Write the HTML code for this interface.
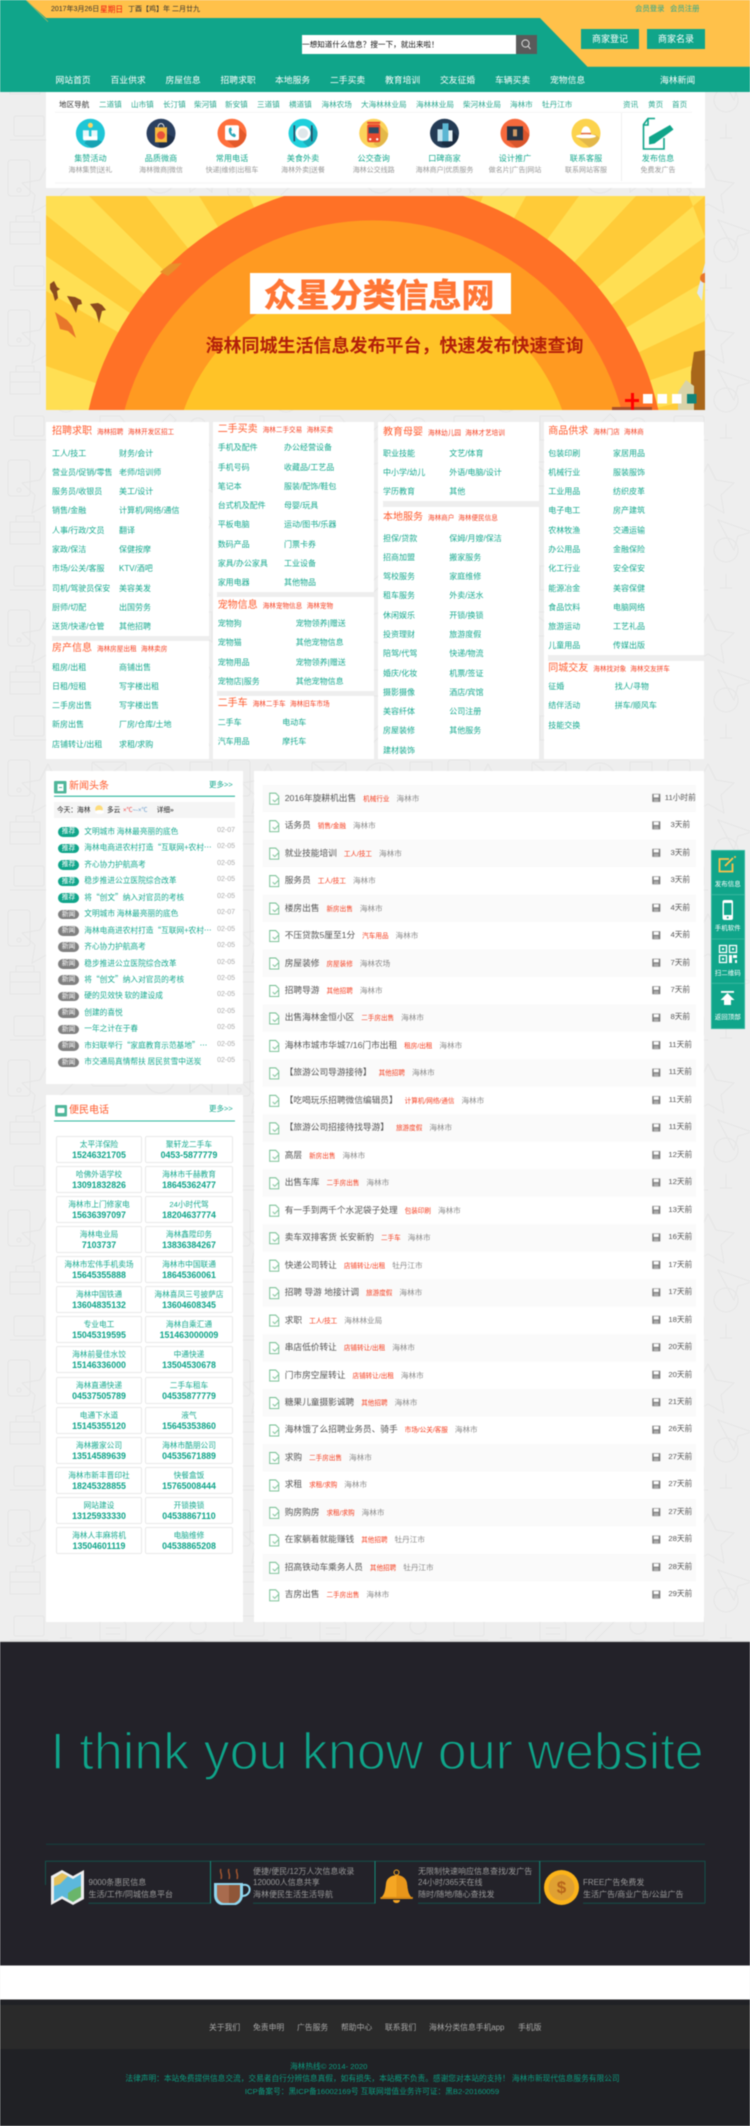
<!DOCTYPE html>
<html lang="zh-CN"><head><meta charset="utf-8"><title>众星分类信息网</title>
<style>
html,body{margin:0;padding:0;background:#eee}
body{width:750px;height:2126px;position:relative;overflow:hidden;font-family:"Liberation Sans","Noto Sans CJK SC",sans-serif;font-size:8px;color:#17a98f}
#w{position:absolute;left:0;top:0;width:750px;height:2126px;filter:blur(.4px)}
#w>svg{position:absolute;left:0;top:0}
.t{position:absolute;white-space:nowrap;line-height:12px;margin-top:-6px}
.c{transform:translateX(-50%)}
.nv{font-size:8.8px;color:#fff}
.sn{font-size:7.6px;color:#2aa78f}
.it{font-size:8.1px;color:#17a98f}
.is{font-size:7px;color:#999}
.h{font-size:10px;color:#ff5c2e}
.s{font-size:6.6px;color:#f53d1e}
.k{position:absolute;display:grid;grid-auto-rows:19.27px;line-height:19.27px;white-space:nowrap}
.n{position:absolute;left:58px;top:823.8px;width:177px;font-size:7.7px}
.n div{height:16.48px;line-height:16.48px;position:relative;white-space:nowrap}
.n b{position:absolute;left:0;top:3.4px;width:21px;height:9.6px;line-height:9.6px;border-radius:5px;background:#808080;color:#fff;font-weight:normal;font-size:6.8px;text-align:center}
.n .a b{background:#10a58a}
.n span{position:absolute;left:26.3px;font-family:"Noto Sans CJK SC","Liberation Sans",sans-serif}
.n em{position:absolute;right:0;top:-1px;font-style:normal;font-size:7px;color:#aaa}
.p{position:absolute;left:55.7px;top:1135.5px;display:grid;grid-template-columns:86.6px 87.4px;column-gap:3px;row-gap:3.15px;grid-auto-rows:27px}
.p div{box-sizing:border-box;border:1px solid #e9e9e9;border-radius:2px;text-align:center;padding-top:2px;font-size:7.7px;line-height:11px;white-space:nowrap}
.p b{display:block;font-size:8.8px;color:#0fa58a}
.l{position:absolute;left:284.7px;top:784.7px;width:411px}
.l div{height:27.47px;line-height:27.47px;font-size:8.7px;color:#555;white-space:nowrap;position:relative}
.l i{font-style:normal;font-size:6.6px;color:#f53d1e;margin-left:7px}
.l u{text-decoration:none;font-size:7.6px;color:#888;margin-left:7px}
.l em{position:absolute;left:395.6px;top:-1px;transform:translateX(-50%);font-style:normal;font-size:7.7px;color:#555}
.f{font-size:6.5px;color:#fff}
.fe{font-size:8px;color:#999}
.fn{font-size:7.8px;color:#aaa}
.cp{font-size:7.7px;color:#0c9c80}
</style></head><body><div id="w">
<svg width="750" height="2126" viewBox="0 0 750 2126" xmlns="http://www.w3.org/2000/svg">
<defs>
<pattern id="bg" patternUnits="userSpaceOnUse" width="220" height="150">
<g fill="none" stroke="#e5e5e5" stroke-width="1">
<rect x="8" y="10" width="22" height="36" rx="3"/><circle cx="19" cy="40" r="2"/>
<path d="M48 14l8 16 18 3-13 12 3 18-16-9-16 9 3-18-13-12 18-3z"/>
<rect x="92" y="12" width="34" height="24" rx="2"/><path d="M92 12l17 13 17-13"/>
<circle cx="160" cy="28" r="15"/><path d="M160 16v12l9 6"/>
<path d="M190 12h22v30l-11-8-11 8z"/>
<path d="M10 72h30v22H10zM16 72v-6h18v6M10 82h30"/>
<path d="M58 70l34 12-14 4-4 14z"/>
<circle cx="118" cy="84" r="11"/><path d="M126 92l10 10"/>
<path d="M152 70h28v26h-28zM158 78h16M158 84h16M158 90h10"/>
<path d="M198 68c8-6 16 0 12 8l-8 16-10-6z"/>
<rect x="14" y="116" width="30" height="20" rx="2"/><path d="M10 140h38"/>
<path d="M66 112a12 12 0 1 1 .1 0zM66 124v14M60 138h12"/>
<path d="M100 116h20l6 8v16h-26zM106 128h14M106 134h14"/>
<path d="M146 138l24-24 6 6-24 24h-6z"/>
<circle cx="198" cy="126" r="8"/><path d="M186 146c2-8 22-8 24 0"/>
</g></pattern>
<clipPath id="cc"><circle cx="15" cy="15" r="14.5"/></clipPath>
<clipPath id="bn"><rect width="659" height="214"/></clipPath>
<pattern id="rw" patternUnits="userSpaceOnUse" x="262.7" y="784.7" width="433.3" height="54.94">
<rect width="433.3" height="27.47" fill="#fafafa"/>
<g id="ri">
<path d="M7 8.5h6l3 3v8H7z" fill="#fff" stroke="#6dbb8c" stroke-width=".9"/><path d="M10 15l2 2 4-4" fill="none" stroke="#6dbb8c" stroke-width=".9"/>
<rect x="389.6" y="9.2" width="8" height="8" fill="#7d7d7d"/><rect x="391" y="9.8" width="5" height="3" fill="#fff"/><rect x="391.2" y="14" width="4.6" height="3.2" fill="#aaa"/>
</g>
<use href="#ri" y="27.47"/>
</pattern>
</defs>
<rect width="750" height="2126" fill="#eeeeee"/>
<rect width="750" height="1642" fill="url(#bg)"/>
<!-- header -->
<rect width="750" height="92" fill="#10a58a"/>
<polygon points="26,0 46,18 540,18 587.5,66.7 750,66.7 750,0" fill="#ffc14a"/>
<line x1="26" y1="0" x2="48" y2="21.7" stroke="#9fb664" stroke-width=".8"/>
<rect x="302" y="35" width="214" height="19" fill="#fff"/>
<rect x="516" y="35" width="21" height="19" fill="#5a5a5a"/>
<circle cx="525.5" cy="43.5" r="3.6" fill="none" stroke="#ddd" stroke-width="1"/><line x1="528" y1="46.2" x2="530.5" y2="49" stroke="#ddd"/>
<rect x="581" y="29" width="58" height="20" fill="#10a58a"/><rect x="647" y="29" width="58" height="20" fill="#10a58a"/>
<!-- white panels -->
<rect x="46" y="92" width="659" height="96" fill="#fff"/>
<line x1="55" y1="112.3" x2="692" y2="112.3" stroke="#f4f4f4"/>
<line x1="55" y1="183" x2="692" y2="183" stroke="#f4f4f4"/>
<line x1="621.5" y1="113" x2="621.5" y2="181" stroke="#f0f0f0"/>
<!-- icons row -->
<g transform="translate(75.4,118.3)"><circle cx="15" cy="15" r="14.5" fill="#1fc6d6"/><path d="M9 25l6-8 14 8-8 8z" fill="#17a3b3" clip-path="url(#cc)"/><circle cx="15" cy="7" r="2.5" fill="#fbd766"/><rect x="7.500" y="12" width="6" height="9" fill="#e9f8fa"/><rect x="16" y="12" width="6" height="9" fill="#e9f8fa"/><rect x="8" y="18" width="14" height="4" fill="#fff"/></g>
<g transform="translate(146,118.3)"><circle cx="15" cy="15" r="14.5" fill="#2a3f5f"/><path d="M10 10l20 10v12H14z" fill="#1e2f49" clip-path="url(#cc)"/><rect x="9" y="9" width="12" height="15" fill="#f7b93e"/><circle cx="15" cy="17" r="4" fill="#e8503a"/><path d="M12 9c0-5 6-5 6 0" fill="none" stroke="#ddd"/></g>
<g transform="translate(217,118.3)"><circle cx="15" cy="15" r="14.5" fill="#ff6f3c"/><path d="M10 22l11-14 10 10-10 14z" fill="#e45a2b" clip-path="url(#cc)"/><rect x="8" y="7" width="14" height="15" rx="2" fill="#fff"/><path d="M12 10c-1 4 1 8 6 9l1-2-2-2-2 1-1-3 1-1-1-3z" fill="#2aa7b8"/></g>
<g transform="translate(288,118.3)"><circle cx="15" cy="15" r="14.5" fill="#1fd0dc"/><path d="M15 24l9-16 8 8-8 16z" fill="#19aebb" clip-path="url(#cc)"/><circle cx="15" cy="15" r="7.500" fill="#fff"/><circle cx="15" cy="15" r="5" fill="#dfe7ea"/><rect x="5.500" y="7" width="1.600" height="16" fill="#2b4a63"/><rect x="23" y="7" width="1.600" height="16" fill="#2b4a63"/></g>
<g transform="translate(358.700,118.300)"><circle cx="15" cy="15" r="14.500" fill="#fcd35a"/><path d="M15 26l7-18 9 9-9 13z" fill="#e4b84a" clip-path="url(#cc)"/><rect x="8.500" y="6" width="13" height="18" rx="2" fill="#e8492f"/><rect x="10" y="9" width="10" height="6" fill="#2c4a63"/><circle cx="11.500" cy="21" r="1.200" fill="#fff"/><circle cx="18.500" cy="21" r="1.200" fill="#fff"/><rect x="8.500" y="3.500" width="13" height="2" fill="#e8492f"/></g>
<g transform="translate(429.500,118.300)"><circle cx="15" cy="15" r="14.500" fill="#243b55"/><path d="M18 8l14 14-8 10-12-6z" fill="#1a2c41" clip-path="url(#cc)"/><rect x="8" y="11" width="5" height="12" fill="#bfe3ef"/><rect x="13" y="5" width="6" height="18" fill="#5bb6d3"/><rect x="19" y="12" width="4" height="11" fill="#e6f2f6"/></g>
<g transform="translate(500,118.300)"><circle cx="15" cy="15" r="14.500" fill="#f7693c"/><path d="M8 22l14-13 10 10-12 14z" fill="#d9552c" clip-path="url(#cc)"/><rect x="7" y="8" width="16" height="14" fill="#263241"/><rect x="13" y="11" width="4" height="7" fill="#c96" /></g>
<g transform="translate(571,118.300)"><circle cx="15" cy="15" r="14.500" fill="#fcd34d"/><path d="M6 19l18-3 8 6-10 10z" fill="#e3b84a" clip-path="url(#cc)"/><path d="M10 17c0-12 10-12 10 0z" fill="#fff"/><rect x="10" y="14.500" width="10" height="2.500" fill="#e2683c"/><ellipse cx="15" cy="18" rx="10" ry="2" fill="#fff"/></g>
<g fill="none" stroke="#10a58a" stroke-width="1.600"><path d="M655 118.500h-7l-4.500 6v24.500h20.500v-11"/><path d="M648 119v6h-4.500"/></g>
<path d="M649 137l21-12 3.500 4.500-19 14-5.500 1z" fill="#10a58a"/>
<!-- banner -->
<g transform="translate(46,196)" clip-path="url(#bn)">
<rect width="659" height="214" fill="#ffcb38"/>
<g fill="#ffdf53">
<polygon points="327,282 43,0 0,0 0,19"/><polygon points="327,282 153,0 100,0"/><polygon points="327,282 241,0 203,0"/>
<polygon points="327,282 480,0 437,0"/><polygon points="327,282 590,0 533,0"/><polygon points="327,282 659,0 643,0 659,41"/>
<polygon points="327,282 0,60 0,95"/><polygon points="327,282 0,170 0,214"/><polygon points="327,282 659,85 659,125"/><polygon points="327,282 659,165 659,200"/>
</g>
<circle cx="327.500" cy="278" r="292" fill="#ff7126"/>
<circle cx="327" cy="282" r="257.600" fill="#ff9a21"/>
<circle cx="327" cy="282" r="201" fill="#ffc327"/>
<rect x="204" y="77" width="261" height="41" fill="#fff"/>
<g fill="#8b4a1e"><path d="M4 88l4-3 3 6 3 2-3 2 1 7-3 3-2-7-3-5z"/><path d="M21 100l8 1 6 3 1 4-4 1-2 8-4-8z"/><path d="M44 108l8-1 4 2 4 5-4 1-3 12-3-11z"/></g>
<path d="M9 116l12 8 5 6 4 12-8-7-8-2z" fill="#e8762a"/>
<path d="M114 76l10-8 12-1-6 6-8 7z" fill="#e8902a"/>
<path d="M656 105l3-32v-6l-8 30z" fill="#dde8f2"/><circle cx="659" cy="82" r="5" fill="#e8762a"/>
<path d="M645 214v-38l3-20 11-2v60z" fill="#a8661a"/>
<path d="M632 214v-18l8-12 8 6v24z" fill="#d9d3a8"/>
<rect x="566" y="211" width="40" height="3" fill="#a8502a"/>
<g fill="#f00"><rect x="585" y="197" width="3" height="17"/><rect x="579" y="203" width="14" height="3"/></g>
<g fill="#fff"><rect x="597" y="198" width="9.500" height="9.500"/><rect x="611.500" y="198" width="9.500" height="9.500"/><rect x="626" y="198" width="9.500" height="9.500"/></g>
<rect x="641" y="198" width="9.500" height="9.500" fill="#10857a"/>
</g>
<!-- category panels -->
<g fill="#fff"><rect x="46" y="422" width="163" height="337"/><rect x="213" y="422" width="161" height="337"/><rect x="378" y="422" width="161" height="337"/><rect x="544" y="422" width="160" height="337"/></g>
<g fill="#eee"><rect x="52" y="636" width="157" height="5"/><rect x="217" y="592" width="157" height="5"/><rect x="217" y="691" width="157" height="5"/><rect x="383" y="501" width="156" height="6"/><rect x="548" y="655" width="156" height="6"/></g>
<!-- left/right panels -->
<g fill="#fff"><rect x="46" y="771" width="197" height="313"/><rect x="46" y="1095" width="197" height="527"/><rect x="254" y="771" width="450" height="851"/></g>
<rect x="54" y="781" width="12.500" height="12.500" rx="1" fill="#4fb69a"/><rect x="57.500" y="784" width="6" height="7" fill="#fff"/><rect x="59" y="787" width="3" height="1" fill="#4fb69a"/>
<line x1="54" y1="796.300" x2="235" y2="796.300" stroke="#12ad92"/>
<rect x="54" y="802" width="181" height="16" fill="#f5f5f5"/>
<circle cx="99" cy="809" r="3.800" fill="#fddc7a"/><ellipse cx="99.500" cy="812" rx="4.500" ry="2" fill="#fff"/>
<rect x="55" y="1105" width="12" height="11.500" rx="1" fill="#4fb69a"/><rect x="57.500" y="1108" width="7" height="5" rx="1" fill="#fff"/>
<line x1="54" y1="1121" x2="235" y2="1121" stroke="#2db89e"/>
<rect x="262.700" y="784.700" width="433.300" height="824.100" fill="url(#rw)"/>
<!-- float -->
<rect x="711.300" y="850.300" width="33.400" height="178.400" fill="#10a58a"/>
<rect x="711.300" y="850.300" width="33.400" height="178.400" fill="none" stroke="#4ec2ac" stroke-width=".7"/>
<g stroke="#3fb9a1" stroke-width=".8"><line x1="711" y1="894.700" x2="745" y2="894.700"/><line x1="711" y1="939" x2="745" y2="939"/><line x1="711" y1="983.300" x2="745" y2="983.300"/></g>
<path d="M729 859h-9.500v12.500h13v-8" fill="none" stroke="#ffc14a" stroke-width="1.800"/><path d="M725 866l8-8" stroke="#ffc14a" stroke-width="1.800"/><circle cx="735" cy="857" r="1" fill="#ffc14a"/>
<rect x="722.500" y="900" width="10.500" height="20" rx="2" fill="#fff"/><rect x="724" y="903" width="7.500" height="12" fill="#10a58a"/><circle cx="727.700" cy="917.500" r="1" fill="#10a58a"/>
<g fill="none" stroke="#fff" stroke-width="1.300"><rect x="719.500" y="945.500" width="7" height="7"/><rect x="729.500" y="945.500" width="7" height="7"/><rect x="719.500" y="955.500" width="7" height="7"/></g>
<g fill="#fff"><rect x="722" y="948" width="2" height="2"/><rect x="732" y="948" width="2" height="2"/><rect x="722" y="958" width="2" height="2"/><rect x="729" y="955" width="3" height="8"/><rect x="733" y="955" width="4" height="3"/><rect x="735" y="960" width="2" height="3"/><rect x="721" y="991" width="13" height="1.800"/><polygon points="727.500,993 734.500,1000 731,1000 731,1005 724,1005 724,1000 720.500,1000"/></g>
<!-- dark -->
<rect y="1642" width="750" height="323.500" fill="#232229"/>
<rect y="1641" width="750" height="1" fill="#ccc"/>
<line x1="46" y1="1844.300" x2="705" y2="1844.300" stroke="#15403f"/>
<g stroke="#15504a" fill="none"><path d="M45.500 1885V1861.300H705V1903.300"/><path d="M88.500 1903.300H210M253 1903.300H375M418 1903.300H540M583 1903.300H705"/></g>
<g stroke="#148a78"><line x1="210.500" y1="1861" x2="210.500" y2="1903.500"/><line x1="375" y1="1861" x2="375" y2="1903.500"/><line x1="539.700" y1="1861" x2="539.700" y2="1903.500"/></g>
<polygon points="51,1876 62,1870 73,1876 84,1870 84,1899 73,1905 62,1899 51,1905" fill="#eee"/>
<polygon points="54,1878 62,1873 73,1879 81,1874 81,1897 73,1902 62,1896 54,1901" fill="#5cb8dc"/>
<polygon points="54,1878 62,1873 68,1876 60,1884 54,1886" fill="#e5c05a"/><polygon points="68,1893 74,1889 81,1886 81,1897 73,1902 68,1899" fill="#6ab56a"/>
<g fill="none" stroke="#a0552f" stroke-width="1.500"><path d="M221 1869c-2 3 2 5 0 10"/><path d="M229 1869c-2 3 2 5 0 10"/><path d="M237 1869c-2 3 2 5 0 10"/></g>
<path d="M214 1883h29v12c0 6-5 10-8 10h-13c-4 0-8-4-8-10z" fill="#8fd6ee"/><path d="M217 1885h23v10c0 5-4 8-7 8h-9c-3 0-7-3-7-8z" fill="#a86b4e"/><path d="M229 1885h11v10c0 5-4 8-7 8h-4z" fill="#8f5638"/>
<path d="M243 1885c9-2 9 11-1 11" fill="none" stroke="#8fd6ee" stroke-width="2"/>
<circle cx="396.500" cy="1872.500" r="2.500" fill="none" stroke="#f5a623"/>
<path d="M380 1898.500c4-3 5-6 6-15 1-11 20-11 21 0 1 9 2 12 6 15z" fill="#f5a623"/><path d="M396.500 1875c5 0 10 3 10.500 9 1 9 2 12 6 15h-16.500z" fill="#e8961a"/>
<path d="M380.500 1897h32.500l-.5 2h-32z" fill="#d98a15"/><path d="M393 1900h7c0 4-7 4-7 0z" fill="#f5a623"/>
<circle cx="561.500" cy="1887.500" r="17.500" fill="#fbb31a"/><circle cx="561.500" cy="1887.500" r="13" fill="#dfa032"/>
<text x="561.500" y="1893" text-anchor="middle" font-family="Liberation Sans,sans-serif" font-size="17" font-weight="bold" fill="#b8651a">$</text>
<rect y="1965.500" width="750" height="34" fill="#fff"/>
<rect y="1999.500" width="750" height="127" fill="#202125"/>
<rect y="2005" width="750" height="44" fill="#2a2a2a"/>
</svg>

<!-- header text -->
<div class="t" style="left:51px;top:9.700px;font-size:7px;color:#333">2017年3月26日</div>
<div class="t" style="left:100px;top:9.700px;font-size:7.700px;color:#f01010">星期日</div>
<div class="t" style="left:128px;top:9.700px;font-size:7px;color:#333">丁酉【鸡】年 二月廿九</div>
<div class="t" style="left:635px;top:9px;font-size:7.400px;color:#2aa78f">会员登录</div>
<div class="t" style="left:670px;top:9px;font-size:7.400px;color:#2aa78f">会员注册</div>
<div class="t" style="left:302px;top:45px;font-size:7.600px;color:#111">一想知道什么信息？搜一下，就出来啦！</div>
<div class="t c" style="left:610px;top:39px;font-size:9px;color:#fff">商家登记</div>
<div class="t c" style="left:676px;top:39px;font-size:9px;color:#fff">商家名录</div>
<div class="t nv" style="left:55.500px;top:80px">网站首页</div>
<div class="t nv" style="left:110.500px;top:80px">百业供求</div>
<div class="t nv" style="left:165.500px;top:80px">房屋信息</div>
<div class="t nv" style="left:220.500px;top:80px">招聘求职</div>
<div class="t nv" style="left:275px;top:80px">本地服务</div>
<div class="t nv" style="left:330px;top:80px">二手买卖</div>
<div class="t nv" style="left:385px;top:80px">教育培训</div>
<div class="t nv" style="left:440px;top:80px">交友征婚</div>
<div class="t nv" style="left:495px;top:80px">车辆买卖</div>
<div class="t nv" style="left:550px;top:80px">宠物信息</div>
<div class="t nv" style="left:660px;top:80px">海林新闻</div>

<div class="t sn" style="left:59px;top:105px;color:#333">地区导航</div>
<div class="t sn" style="left:99px;top:105px">二道镇</div>
<div class="t sn" style="left:131px;top:105px">山市镇</div>
<div class="t sn" style="left:163px;top:105px">长汀镇</div>
<div class="t sn" style="left:194px;top:105px">柴河镇</div>
<div class="t sn" style="left:225px;top:105px">新安镇</div>
<div class="t sn" style="left:257px;top:105px">三道镇</div>
<div class="t sn" style="left:289px;top:105px">横道镇</div>
<div class="t sn" style="left:321.500px;top:105px">海林农场</div>
<div class="t sn" style="left:361px;top:105px">大海林林业局</div>
<div class="t sn" style="left:416px;top:105px">海林林业局</div>
<div class="t sn" style="left:463px;top:105px">柴河林业局</div>
<div class="t sn" style="left:510px;top:105px">海林市</div>
<div class="t sn" style="left:542px;top:105px">牡丹江市</div>
<div class="t sn" style="left:623px;top:105px">资讯</div>
<div class="t sn" style="left:648px;top:105px">黄页</div>
<div class="t sn" style="left:672px;top:105px">首页</div>

<div class="t c it" style="left:90.400px;top:158.500px">集赞活动</div><div class="t c is" style="left:90.400px;top:170.700px">海林集赞|送礼</div>
<div class="t c it" style="left:161px;top:158.500px">品质微商</div><div class="t c is" style="left:161px;top:170.700px">海林微商|微信</div>
<div class="t c it" style="left:232px;top:158.500px">常用电话</div><div class="t c is" style="left:232px;top:170.700px">快递|维修|出租车</div>
<div class="t c it" style="left:303px;top:158.500px">美食外卖</div><div class="t c is" style="left:303px;top:170.700px">海林外卖|送餐</div>
<div class="t c it" style="left:373.700px;top:158.500px">公交查询</div><div class="t c is" style="left:373.700px;top:170.700px">海林公交线路</div>
<div class="t c it" style="left:444.500px;top:158.500px">口碑商家</div><div class="t c is" style="left:444.500px;top:170.700px">海林商户|优质服务</div>
<div class="t c it" style="left:515px;top:158.500px">设计推广</div><div class="t c is" style="left:515px;top:170.700px">做名片|广告|网站</div>
<div class="t c it" style="left:586px;top:158.500px">联系客服</div><div class="t c is" style="left:586px;top:170.700px">联系网站客服</div>
<div class="t c it" style="left:658px;top:158.500px">发布信息</div><div class="t c is" style="left:658px;top:170.700px">免费发广告</div>

<!-- banner text -->
<div class="t c" style="left:379px;top:293px;font-size:33px;line-height:40px;margin-top:-20px;font-weight:900;color:#ff7635;font-family:'Noto Sans CJK SC',sans-serif">众星分类信息网</div>
<div class="t c" style="left:394.500px;top:345px;font-size:18px;line-height:24px;margin-top:-12px;font-weight:700;color:#b3200a;font-family:'Noto Sans CJK SC',sans-serif">海林同城生活信息发布平台，快速发布快速查询</div>

<!-- categories -->
<div class="t h" style="left:52px;top:432px">招聘求职</div><div class="t s" style="left:97px;top:433px">海林招聘</div><div class="t s" style="left:128px;top:433px">海林开发区招工</div>
<div class="k" style="left:52px;top:443.700px;grid-template-columns:67px auto"><span>工人/技工</span><span>财务/会计</span><span>营业员/促销/零售</span><span>老师/培训师</span><span>服务员/收银员</span><span>美工/设计</span><span>销售/金融</span><span>计算机/网络/通信</span><span>人事/行政/文员</span><span>翻译</span><span>家政/保洁</span><span>保健按摩</span><span>市场/公关/客服</span><span>KTV/酒吧</span><span>司机/驾驶员保安</span><span>美容美发</span><span>厨师/切配</span><span>出国劳务</span><span>送货/快递/仓管</span><span>其他招聘</span></div>
<div class="t h" style="left:52px;top:649.300px">房产信息</div><div class="t s" style="left:97px;top:650.300px">海林房屋出租</div><div class="t s" style="left:141px;top:650.300px">海林卖房</div>
<div class="k" style="left:52px;top:657.700px;grid-template-columns:67px auto"><span>租房/出租</span><span>商铺出售</span><span>日租/短租</span><span>写字楼出租</span><span>二手房出售</span><span>写字楼出售</span><span>新房出售</span><span>厂房/仓库/土地</span><span>店铺转让/出租</span><span>求租/求购</span></div>

<div class="t h" style="left:217.700px;top:430px">二手买卖</div><div class="t s" style="left:262.700px;top:431px">海林二手交易</div><div class="t s" style="left:306.700px;top:431px">海林买卖</div>
<div class="k" style="left:217.700px;top:438.400px;grid-template-columns:66.300px auto"><span>手机及配件</span><span>办公经营设备</span><span>手机号码</span><span>收藏品/工艺品</span><span>笔记本</span><span>服装/配饰/鞋包</span><span>台式机及配件</span><span>母婴/玩具</span><span>平板电脑</span><span>运动/图书/乐器</span><span>数码产品</span><span>门票卡券</span><span>家具/办公家具</span><span>工业设备</span><span>家用电器</span><span>其他物品</span></div>
<div class="t h" style="left:217.700px;top:605.700px">宠物信息</div><div class="t s" style="left:262.700px;top:606.700px">海林宠物信息</div><div class="t s" style="left:306.700px;top:606.700px">海林宠物</div>
<div class="k" style="left:217.700px;top:614.100px;grid-template-columns:78px auto"><span>宠物狗</span><span>宠物领养|赠送</span><span>宠物猫</span><span>其他宠物信息</span><span>宠物用品</span><span>宠物领养|赠送</span><span>宠物店|服务</span><span>其他宠物信息</span></div>
<div class="t h" style="left:217.700px;top:704.300px">二手车</div><div class="t s" style="left:252.700px;top:705.300px">海林二手车</div><div class="t s" style="left:290px;top:705.300px">海林旧车市场</div>
<div class="k" style="left:217.700px;top:713px;grid-template-columns:64.600px auto"><span>二手车</span><span>电动车</span><span>汽车用品</span><span>摩托车</span></div>

<div class="t h" style="left:383px;top:432.700px">教育母婴</div><div class="t s" style="left:428px;top:433.700px">海林幼儿园</div><div class="t s" style="left:465.300px;top:433.700px">海林才艺培训</div>
<div class="k" style="left:383px;top:443.700px;grid-template-columns:66.300px auto"><span>职业技能</span><span>文艺/体育</span><span>中小学/幼儿</span><span>外语/电脑/设计</span><span>学历教育</span><span>其他</span></div>
<div class="t h" style="left:383px;top:517.700px">本地服务</div><div class="t s" style="left:428px;top:518.700px">海林商户</div><div class="t s" style="left:458.300px;top:518.700px">海林便民信息</div>
<div class="k" style="left:383px;top:528.700px;grid-template-columns:66.300px auto"><span>担保/贷款</span><span>保姆/月嫂/保洁</span><span>招商加盟</span><span>搬家服务</span><span>驾校服务</span><span>家庭维修</span><span>租车服务</span><span>外卖/送水</span><span>休闲娱乐</span><span>开锁/换锁</span><span>投资理财</span><span>旅游度假</span><span>陪驾/代驾</span><span>快递/物流</span><span>婚庆/化妆</span><span>机票/签证</span><span>摄影摄像</span><span>酒店/宾馆</span><span>美容纤体</span><span>公司注册</span><span>房屋装修</span><span>其他服务</span><span>建材装饰</span></div>

<div class="t h" style="left:548.300px;top:432px">商品供求</div><div class="t s" style="left:593.300px;top:433px">海林门店</div><div class="t s" style="left:624px;top:433px">海林商</div>
<div class="k" style="left:548.300px;top:443.700px;grid-template-columns:64.700px auto"><span>包装印刷</span><span>家居用品</span><span>机械行业</span><span>服装服饰</span><span>工业用品</span><span>纺织皮革</span><span>电子电工</span><span>房产建筑</span><span>农林牧渔</span><span>交通运输</span><span>办公用品</span><span>金融保险</span><span>化工行业</span><span>安全保安</span><span>能源冶金</span><span>美容保健</span><span>食品饮料</span><span>电脑网络</span><span>旅游运动</span><span>工艺礼品</span><span>儿童用品</span><span>传媒出版</span></div>
<div class="t h" style="left:548.300px;top:668.700px">同城交友</div><div class="t s" style="left:593.300px;top:669.700px">海林找对象</div><div class="t s" style="left:630.300px;top:669.700px">海林交友拼车</div>
<div class="k" style="left:548.300px;top:677px;grid-template-columns:66.400px auto"><span>征婚</span><span>找人/寻物</span><span>结伴活动</span><span>拼车/顺风车</span><span>技能交换</span></div>

<!-- news -->
<div class="t h" style="left:69px;top:786.700px">新闻头条</div>
<div class="t" style="left:209px;top:785px;font-size:7.500px">更多&gt;&gt;</div>
<div class="t" style="left:57px;top:810.700px;font-size:6.700px;color:#222">今天：海林</div>
<div class="t" style="left:107px;top:810.700px;font-size:6.700px;color:#222">多云</div>
<div class="t" style="left:123px;top:810.700px;font-size:6px;color:#e44">×℃<span style="color:#69c">~-×℃</span></div>
<div class="t" style="left:156.700px;top:810.700px;font-size:6.700px;color:#222">详细»</div>
<div class="n">
<div class="a"><b>推荐</b><span>文明城市 海林最亮丽的底色</span><em>02-07</em></div>
<div class="a"><b>推荐</b><span>海林电商进农村打造“互联网+农村…</span><em>02-05</em></div>
<div class="a"><b>推荐</b><span>齐心协力护航高考</span><em>02-05</em></div>
<div class="a"><b>推荐</b><span>稳步推进公立医院综合改革</span><em>02-05</em></div>
<div class="a"><b>推荐</b><span>将“创文”纳入对官员的考核</span><em>02-05</em></div>
<div><b>新闻</b><span>文明城市 海林最亮丽的底色</span><em>02-07</em></div>
<div><b>新闻</b><span>海林电商进农村打造“互联网+农村…</span><em>02-05</em></div>
<div><b>新闻</b><span>齐心协力护航高考</span><em>02-05</em></div>
<div><b>新闻</b><span>稳步推进公立医院综合改革</span><em>02-05</em></div>
<div><b>新闻</b><span>将“创文”纳入对官员的考核</span><em>02-05</em></div>
<div><b>新闻</b><span>硬的见效快 软的建设成</span><em>02-05</em></div>
<div><b>新闻</b><span>创建的喜悦</span><em>02-05</em></div>
<div><b>新闻</b><span>一年之计在于春</span><em>02-05</em></div>
<div><b>新闻</b><span>市妇联举行“家庭教育示范基地”…</span><em>02-05</em></div>
<div><b>新闻</b><span>市交通局真情帮扶 居民贫雪中送炭</span><em>02-05</em></div>
</div>

<!-- phones -->
<div class="t h" style="left:69px;top:1110.700px">便民电话</div>
<div class="t" style="left:209px;top:1109px;font-size:7.500px">更多&gt;&gt;</div>
<div class="p">
<div>太平洋保险<b>15246321705</b></div><div>聚轩龙二手车<b>0453-5877779</b></div>
<div>哈佛外语学校<b>13091832826</b></div><div>海林市千赫教育<b>18645362477</b></div>
<div>海林市上门修家电<b>15636397097</b></div><div>24小时代驾<b>18204637774</b></div>
<div>海林电业局<b>7103737</b></div><div>海林鑫陞印务<b>13836384267</b></div>
<div>海林市宏伟手机卖场<b>15645355888</b></div><div>海林市中国联通<b>18645360061</b></div>
<div>海林中国铁通<b>13604835132</b></div><div>海林喜凤三号披萨店<b>13604608345</b></div>
<div>专业电工<b>15045319595</b></div><div>海林自乘汇通<b>151463000009</b></div>
<div>海林前曼佳水饺<b>15146336000</b></div><div>中通快递<b>13504530678</b></div>
<div>海林直通快递<b>04537505789</b></div><div>二手车租车<b>04535877779</b></div>
<div>电通下水道<b>15145355120</b></div><div>液气<b>15645353860</b></div>
<div>海林搬家公司<b>13514589639</b></div><div>海林市酷朋公司<b>04535671889</b></div>
<div>海林市新丰晋印社<b>18245328855</b></div><div>快餐盒饭<b>15765008444</b></div>
<div>网站建设<b>13125933330</b></div><div>开锁换锁<b>04538867110</b></div>
<div>海林人丰麻将机<b>13504601119</b></div><div>电脑维修<b>04538865208</b></div>
</div>

<!-- list -->
<div class="l">
<div>2016年旋耕机出售<i>机械行业</i><u>海林市</u><em>11小时前</em></div>
<div>话务员<i>销售/金融</i><u>海林市</u><em>3天前</em></div>
<div>就业技能培训<i>工人/技工</i><u>海林市</u><em>3天前</em></div>
<div>服务员<i>工人/技工</i><u>海林市</u><em>3天前</em></div>
<div>楼房出售<i>新房出售</i><u>海林市</u><em>4天前</em></div>
<div>不压贷款5厘至1分<i>汽车用品</i><u>海林市</u><em>4天前</em></div>
<div>房屋装修<i>房屋装修</i><u>海林农场</u><em>7天前</em></div>
<div>招聘导游<i>其他招聘</i><u>海林市</u><em>7天前</em></div>
<div>出售海林金恒小区<i>二手房出售</i><u>海林市</u><em>8天前</em></div>
<div>海林市城市华城7/16门市出租<i>租房/出租</i><u>海林市</u><em>11天前</em></div>
<div>【旅游公司导游接待】<i>其他招聘</i><u>海林市</u><em>11天前</em></div>
<div>【吃喝玩乐招聘微信编辑员】<i>计算机/网络/通信</i><u>海林市</u><em>11天前</em></div>
<div>【旅游公司招接待找导游】<i>旅游度假</i><u>海林市</u><em>11天前</em></div>
<div>高层<i>新房出售</i><u>海林市</u><em>12天前</em></div>
<div>出售车库<i>二手房出售</i><u>海林市</u><em>12天前</em></div>
<div>有一手到两千个水泥袋子处理<i>包装印刷</i><u>海林市</u><em>13天前</em></div>
<div>卖车双排客货 长安新豹<i>二手车</i><u>海林市</u><em>16天前</em></div>
<div>快递公司转让<i>店铺转让/出租</i><u>牡丹江市</u><em>17天前</em></div>
<div>招聘 导游 地接计调<i>旅游度假</i><u>海林市</u><em>17天前</em></div>
<div>求职<i>工人/技工</i><u>海林林业局</u><em>18天前</em></div>
<div>串店低价转让<i>店铺转让/出租</i><u>海林市</u><em>20天前</em></div>
<div>门市房空屋转让<i>店铺转让/出租</i><u>海林市</u><em>20天前</em></div>
<div>糖果儿童摄影诚聘<i>其他招聘</i><u>海林市</u><em>21天前</em></div>
<div>海林饿了么招聘业务员、骑手<i>市场/公关/客服</i><u>海林市</u><em>26天前</em></div>
<div>求购<i>二手房出售</i><u>海林市</u><em>27天前</em></div>
<div>求租<i>求租/求购</i><u>海林市</u><em>27天前</em></div>
<div>购房购房<i>求租/求购</i><u>海林市</u><em>27天前</em></div>
<div>在家躺着就能赚钱<i>其他招聘</i><u>牡丹江市</u><em>28天前</em></div>
<div>招高铁动车乘务人员<i>其他招聘</i><u>牡丹江市</u><em>28天前</em></div>
<div>吉房出售<i>二手房出售</i><u>海林市</u><em>29天前</em></div>
</div>

<!-- float labels -->
<div class="t c f" style="left:727.700px;top:885px">发布信息</div>
<div class="t c f" style="left:727.700px;top:929.300px">手机软件</div>
<div class="t c f" style="left:727.700px;top:973.700px">扫二维码</div>
<div class="t c f" style="left:727.700px;top:1018px">返回顶部</div>

<!-- dark -->
<div class="t" style="left:50.500px;top:1752px;font-size:52px;line-height:70px;margin-top:-35px;color:#0fa58a;-webkit-text-stroke:1.4px #232229">I think you know our website</div>
<div class="t fe" style="left:88.500px;top:1883.300px">9000条惠民信息</div>
<div class="t fe" style="left:88.500px;top:1894.700px">生活/工作/同城信息平台</div>
<div class="t fe" style="left:253px;top:1871.700px">便捷/便民/12万人次信息收录</div>
<div class="t fe" style="left:253px;top:1883.300px">120000人信息共享</div>
<div class="t fe" style="left:253px;top:1894.700px">海林便民生活生活导航</div>
<div class="t fe" style="left:418px;top:1871.700px">无限制快速响应信息查找/发广告</div>
<div class="t fe" style="left:418px;top:1883.300px">24小时/365天在线</div>
<div class="t fe" style="left:418px;top:1894.700px">随时/随地/随心查找发</div>
<div class="t fe" style="left:583px;top:1883.300px">FREE广告免费发</div>
<div class="t fe" style="left:583px;top:1894.700px">生活广告/商业广告/公益广告</div>

<div class="t fn" style="left:209px;top:2027.700px">关于我们</div>
<div class="t fn" style="left:253px;top:2027.700px">免责申明</div>
<div class="t fn" style="left:297px;top:2027.700px">广告服务</div>
<div class="t fn" style="left:341px;top:2027.700px">帮助中心</div>
<div class="t fn" style="left:385px;top:2027.700px">联系我们</div>
<div class="t fn" style="left:429px;top:2027.700px">海林分类信息手机app</div>
<div class="t fn" style="left:518px;top:2027.700px">手机版</div>
<div class="t c cp" style="left:328.700px;top:2066.700px">海林热线© 2014- 2020</div>
<div class="t c cp" style="left:372.500px;top:2079.300px">法律声明：本站免费提供信息交流，交易者自行分辨信息真假，如有损失，本站概不负责。感谢您对本站的支持！ 海林市新现代信息服务有限公司</div>
<div class="t c cp" style="left:372px;top:2091.700px">ICP备案号：黑ICP备16002169号 互联网增值业务许可证：黑B2-20160059</div>
</div></body></html>
